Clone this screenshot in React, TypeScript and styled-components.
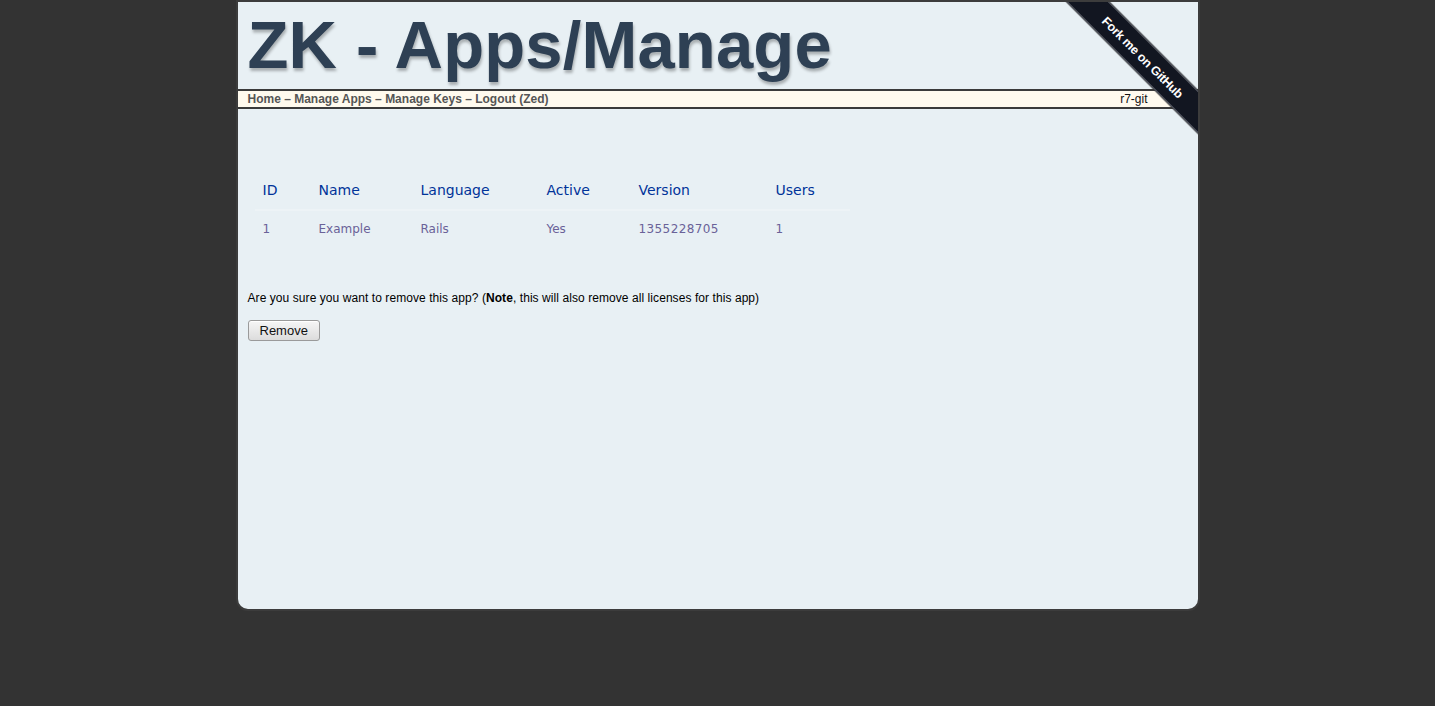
import React from "react";
import styled, { createGlobalStyle } from "styled-components";

const GlobalStyle = createGlobalStyle`
  html, body {
    margin: 0;
    padding: 0;
    background: #333333;
    font-family: "Liberation Sans", Arial, sans-serif;
    font-size: 12px;
  }
`;

const Page = styled.div`
  width: 960px;
  margin: 0 auto;
  background: #e8f0f4;
  border: 2px solid #3c3c3c;
  border-radius: 0 0 12px 12px;
  position: relative;
  overflow: hidden;
`;

const Header = styled.header`
  height: 87px;
  padding: 4px 10px 0 10px;
  box-sizing: border-box;
`;

const Title = styled.h1`
  margin: 0;
  font-family: "Liberation Sans", Arial, sans-serif;
  font-size: 67px;
  line-height: 77px;
  font-weight: bold;
  color: #2e4054;
  letter-spacing: 0.15px;
  text-shadow: 1px 3px 3px rgba(0, 0, 0, 0.28);
`;

const Nav = styled.nav`
  display: flex;
  justify-content: space-between;
  align-items: center;
  height: 16px;
  padding: 0 50px 0 10px;
  background: #fffaee;
  border-top: 2px solid #3a3a3a;
  border-bottom: 2px solid #3a3a3a;
  font-size: 12px;
`;

const NavLinks = styled.div`
  font-weight: bold;
  color: #555555;
`;

const NavLink = styled.a`
  color: #555555;
  text-decoration: none;
`;

const Revision = styled.span`
  color: #111111;
`;

const Main = styled.main`
  height: 500px;
  padding: 63px 10px 0;
  box-sizing: border-box;
`;

const Table = styled.table`
  border-collapse: collapse;
  table-layout: fixed;
  margin-left: 7px;
  font-family: "DejaVu Sans", "Lucida Sans Unicode", sans-serif;
  font-size: 12px;
  text-align: left;
`;

const Th = styled.th<{ $w: number }>`
  width: ${(p) => p.$w}px;
  box-sizing: border-box;
  padding: 10px 8px;
  font-size: 14px;
  line-height: 17px;
  font-weight: normal;
  color: #003399;
  border-bottom: 2px solid #edf3f6;
`;

const Td = styled.td<{ $mono?: boolean }>`
  padding: 11px 8px 0;
  line-height: 14px;
  color: #6a6298;
  letter-spacing: ${(p) => (p.$mono ? "0.4px" : "0")};
`;

const Confirm = styled.p`
  margin: 55px 0 0;
  line-height: 14px;
  font-size: 12px;
  letter-spacing: 0.07px;
  color: #000;
`;

const RemoveButton = styled.button`
  margin-top: 15px;
  height: 21px;
  padding: 0 11px;
  font-family: "Liberation Sans", Arial, sans-serif;
  font-size: 13px;
  color: #111;
  background: linear-gradient(#f6f6f6, #dcdcdc);
  border: 1px solid #9a9a9a;
  border-radius: 3px;
  box-shadow: inset 0 1px 0 #fff;
  cursor: pointer;
`;

const RibbonWrap = styled.div`
  position: absolute;
  top: 0;
  right: 0;
  width: 150px;
  height: 150px;
  overflow: hidden;
  pointer-events: none;
`;

const Ribbon = styled.a`
  position: absolute;
  left: -8px;
  top: 40px;
  width: 206px;
  height: 30px;
  box-sizing: border-box;
  transform: rotate(45deg);
  background: #121621;
  border-top: 1px solid #5a5d66;
  border-bottom: 1px solid #5a5d66;
  box-shadow: 0 0 0 1px rgba(60, 60, 60, 0.6);
  display: flex;
  align-items: center;
  justify-content: center;
  padding-top: 2px;
  color: #ffffff;
  font-family: "Liberation Sans", Arial, sans-serif;
  font-weight: bold;
  font-size: 12.5px;
  letter-spacing: -0.2px;
  text-decoration: none;
  pointer-events: auto;
`;

const columns = [
  { label: "ID", w: 56 },
  { label: "Name", w: 102 },
  { label: "Language", w: 126 },
  { label: "Active", w: 92 },
  { label: "Version", w: 137 },
  { label: "Users", w: 82 },
];

const row = ["1", "Example", "Rails", "Yes", "1355228705", "1"];

export default function App() {
  return (
    <>
      <GlobalStyle />
      <Page>
        <Header>
          <Title>ZK - Apps/Manage</Title>
        </Header>
        <Nav>
          <NavLinks>
            <NavLink href="#">Home</NavLink> – <NavLink href="#">Manage Apps</NavLink> –{" "}
            <NavLink href="#">Manage Keys</NavLink> – <NavLink href="#">Logout (Zed)</NavLink>
          </NavLinks>
          <Revision>r7-git</Revision>
        </Nav>
        <Main>
          <Table>
            <thead>
              <tr>
                {columns.map((c) => (
                  <Th key={c.label} $w={c.w}>
                    {c.label}
                  </Th>
                ))}
              </tr>
            </thead>
            <tbody>
              <tr>
                {row.map((v, i) => (
                  <Td key={i} $mono={i === 4}>
                    {v}
                  </Td>
                ))}
              </tr>
            </tbody>
          </Table>
          <Confirm>
            Are you sure you want to remove this app? (<b>Note</b>, this will also remove all licenses for this app)
          </Confirm>
          <RemoveButton>Remove</RemoveButton>
        </Main>
        <RibbonWrap>
          <Ribbon href="#">Fork me on GitHub</Ribbon>
        </RibbonWrap>
      </Page>
    </>
  );
}
